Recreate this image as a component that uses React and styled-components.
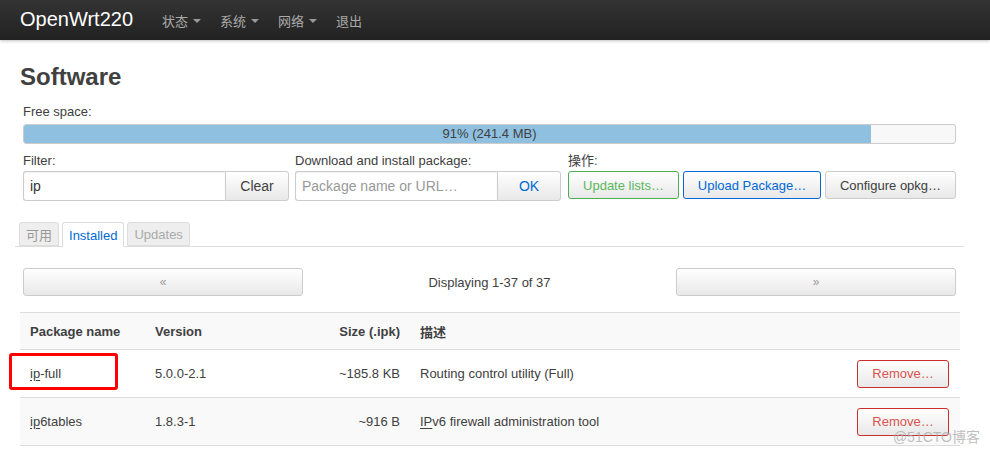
import styled, { createGlobalStyle } from 'styled-components'

const GlobalStyle = createGlobalStyle`
  body {
    margin: 0;
    background: #fff;
    font-family: "Liberation Sans", Arial, "Noto Sans CJK SC", sans-serif;
    font-size: 13px;
    color: #404040;
  }
`

const Page = styled.div`
  position: relative;
  width: 990px;
  height: 454px;
  overflow: hidden;
`

const NavBar = styled.div`
  height: 40px;
  display: flex;
  align-items: center;
  padding-left: 20px;
  background: linear-gradient(#333, #222);
  box-shadow: 0 1px 3px rgba(0, 0, 0, 0.25);
`

const Brand = styled.div`
  font-size: 20px;
  color: #fff;
  margin-right: 29px;
  margin-top: -2px;
`

const NavItem = styled.div`
  display: flex;
  align-items: center;
  gap: 5px;
  color: #aaa;
  font-size: 13px;
  margin-right: 19px;
`

const Caret = styled.span`
  width: 0;
  height: 0;
  border-left: 4px solid transparent;
  border-right: 4px solid transparent;
  border-top: 4px solid #999;
  margin-top: 1px;
`

const Main = styled.div`
  padding: 0 30px 0 20px;
`

const Title = styled.h2`
  margin: 22px 0 0;
  font-size: 24px;
  line-height: 30px;
  font-weight: bold;
  color: #404040;
`

const Fields = styled.div`
  padding: 0 4px 0 3px;
`

const Label = styled.div`
  line-height: 16px;
  margin: ${(p) => p.$m || '0'};
`

const Progress = styled.div`
  position: relative;
  height: 18px;
  margin-top: 4px;
  border: 1px solid #ccc;
  border-radius: 3px;
  background: #f8f8f8;
  overflow: hidden;
`

const ProgressFill = styled.div`
  height: 100%;
  background: #8fc0e0;
`

const ProgressText = styled.div`
  position: absolute;
  inset: 0;
  text-align: center;
  line-height: 18px;
`

const ControlRow = styled.div`
  display: flex;
  margin-top: 9px;
`

const Group = styled.div`
  width: ${(p) => p.$w}px;
  margin-right: ${(p) => p.$mr || 0}px;
`

const InputGroup = styled.div`
  display: flex;
  height: 30px;
  margin-top: 2px;
`

const TextInput = styled.div`
  flex: 1;
  border: 1px solid #ccc;
  border-right: none;
  border-radius: 3px 0 0 3px;
  padding: 0 6px;
  display: flex;
  align-items: center;
  font-size: 14px;
  color: ${(p) => (p.$ph ? '#999' : '#333')};
  box-shadow: inset 0 1px 2px rgba(0, 0, 0, 0.06);
`

const Btn = styled.div`
  display: flex;
  align-items: center;
  justify-content: center;
  box-sizing: border-box;
  height: ${(p) => p.$h || 28}px;
  width: ${(p) => (p.$w ? `${p.$w}px` : 'auto')};
  border: 1px solid ${(p) => p.$border || '#ccc'};
  border-radius: ${(p) => p.$radius || '3px'};
  background: linear-gradient(#fff, #e8e8e8);
  color: ${(p) => p.$color || '#404040'};
  font-size: ${(p) => p.$fs || 14}px;
  white-space: nowrap;
`

const ButtonRow = styled.div`
  display: flex;
  gap: 4px;
  margin-top: 2px;
`

const Tabs = styled.div`
  display: flex;
  gap: 3px;
  margin: 21px -4px 0 -5px;
  padding-left: 4px;
  border-bottom: 1px solid #ddd;
  height: 24px;
`

const Tab = styled.div`
  box-sizing: border-box;
  height: ${(p) => (p.$active ? 25 : 24)}px;
  padding: 0 6px;
  display: flex;
  align-items: center;
  border: 1px solid #ddd;
  border-bottom: ${(p) => (p.$active ? 'none' : '1px solid #ddd')};
  border-radius: 3px 3px 0 0;
  background: ${(p) => (p.$active ? '#fff' : '#eee')};
  color: ${(p) => p.$color || (p.$active ? '#0069d6' : '#999')};
  font-size: 13px;
`

const Pager = styled.div`
  display: grid;
  grid-template-columns: 280px 1fr 280px;
  align-items: center;
  margin-top: 21px;
`

const PagerInfo = styled.div`
  text-align: center;
`

const Table = styled.div`
  margin-top: 16px;
  border-top: 1px solid #ddd;
`

const Row = styled.div`
  position: relative;
  display: grid;
  grid-template-columns: 125px 140px 125px 1fr 120px;
  align-items: center;
  height: ${(p) => p.$h}px;
  background: ${(p) => (p.$alt ? '#f9f9f9' : '#fff')};
  border-bottom: 1px solid #ddd;
  font-weight: ${(p) => (p.$head ? 'bold' : 'normal')};
`

const Cell = styled.div`
  padding: 0 10px;
  text-align: ${(p) => p.$align || 'left'};
  display: ${(p) => (p.$flex ? 'flex' : 'block')};
  justify-content: flex-end;
  padding-right: ${(p) => p.$pr ?? 10}px;
`

const Match = styled.span`
  text-decoration: underline;
  text-underline-offset: 2px;
`

const Marker = styled.div`
  position: absolute;
  left: -11px;
  top: 3px;
  width: 103px;
  height: 31px;
  border: 3px solid #f00;
  border-radius: 3px;
`

const Watermark = styled.div`
  position: absolute;
  right: 10px;
  bottom: 8px;
  font-size: 14px;
  color: rgba(170, 170, 170, 0.75);
`

const packages = [
  { name: 'full', version: '5.0.0-2.1', size: '~185.8 KB', desc: 'Routing control utility (Full)', sep: '-', marked: true },
  { name: '6tables', version: '1.8.3-1', size: '~916 B', desc: 'v6 firewall administration tool', sep: '', descMatch: 'IP' },
]

export default function App() {
  return (
    <Page>
      <GlobalStyle />
      <NavBar>
        <Brand>OpenWrt220</Brand>
        <NavItem>状态<Caret /></NavItem>
        <NavItem>系统<Caret /></NavItem>
        <NavItem>网络<Caret /></NavItem>
        <NavItem>退出</NavItem>
      </NavBar>
      <Main>
        <Title>Software</Title>
        <Fields>
          <Label $m="12px 0 0">Free space:</Label>
          <Progress>
            <ProgressFill style={{ width: '91%' }} />
            <ProgressText>91% (241.4 MB)</ProgressText>
          </Progress>
          <ControlRow>
            <Group $w={266} $mr={6}>
              <Label>Filter:</Label>
              <InputGroup>
                <TextInput>ip</TextInput>
                <Btn $h={30} $w={64} $radius="0 3px 3px 0">Clear</Btn>
              </InputGroup>
            </Group>
            <Group $w={266} $mr={7}>
              <Label>Download and install package:</Label>
              <InputGroup>
                <TextInput $ph>Package name or URL…</TextInput>
                <Btn $h={30} $w={64} $radius="0 3px 3px 0" $color="#0069d6">OK</Btn>
              </InputGroup>
            </Group>
            <Group $w={388}>
              <Label>操作:</Label>
              <ButtonRow>
                <Btn $w={111} $border="#4cae4c" $color="#5cb85c" $fs={13}>Update lists…</Btn>
                <Btn $w={138} $border="#0069d6" $color="#0069d6" $fs={13}>Upload Package…</Btn>
                <Btn $w={131} $fs={13}>Configure opkg…</Btn>
              </ButtonRow>
            </Group>
          </ControlRow>
        </Fields>
        <Tabs>
          <Tab>可用</Tab>
          <Tab $active>Installed</Tab>
          <Tab $color="#aaa">Updates</Tab>
        </Tabs>
        <Fields>
          <Pager>
            <Btn $h={28} $color="#999" $fs={12}>«</Btn>
            <PagerInfo>Displaying 1-37 of 37</PagerInfo>
            <Btn $h={28} $color="#999" $fs={12}>»</Btn>
          </Pager>
        </Fields>
        <Table>
          <Row $head $alt $h={36}>
            <Cell>Package name</Cell>
            <Cell>Version</Cell>
            <Cell $align="right">Size (.ipk)</Cell>
            <Cell>描述</Cell>
            <Cell />
          </Row>
          {packages.map((p, i) => (
            <Row key={p.name} $alt={i % 2 === 1} $h={47}>
              {p.marked && <Marker />}
              <Cell><Match>ip</Match>{p.sep}{p.name}</Cell>
              <Cell>{p.version}</Cell>
              <Cell $align="right">{p.size}</Cell>
              <Cell>{p.descMatch ? <Match>{p.descMatch}</Match> : null}{p.desc}</Cell>
              <Cell $flex $pr={11}>
                <Btn $w={92} $border="#c9302c" $color="#d9534f" $fs={13}>Remove…</Btn>
              </Cell>
            </Row>
          ))}
        </Table>
      </Main>
      <Watermark>@51CTO博客</Watermark>
    </Page>
  )
}
